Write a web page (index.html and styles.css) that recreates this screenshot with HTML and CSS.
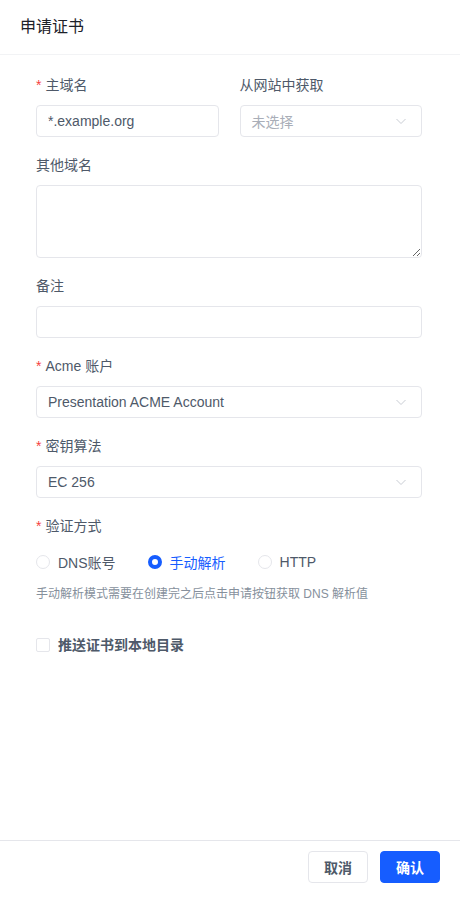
FILE: index.html
```html
<!DOCTYPE html>
<html lang="zh-CN">
<head>
    <meta charset="UTF-8">
    <meta name="viewport" content="width=device-width, initial-scale=1.0">
    <title>申请证书</title>
    <link rel="stylesheet" href="styles.css">
</head>
<body>
    <div class="drawer">
        <!-- Drawer header -->
        <div class="drawer-header">申请证书</div>

        <!-- Form body -->
        <div class="drawer-body">
            <div class="row">
                <div class="form-item">
                    <label class="label"><span class="required">*</span>主域名</label>
                    <input type="text" class="input" value="*.example.org">
                </div>
                <div class="form-item">
                    <label class="label">从网站中获取</label>
                    <div class="select">
                        <span class="placeholder">未选择</span>
                        <svg class="arrow" width="12" height="12" viewBox="0 0 12 12"><path d="M1.5 4l4.5 4.5L10.5 4" fill="none" stroke="#c9cdd4" stroke-width="1"/></svg>
                    </div>
                </div>
            </div>

            <div class="form-item">
                <label class="label">其他域名</label>
                <textarea class="textarea"></textarea>
            </div>

            <div class="form-item">
                <label class="label">备注</label>
                <input type="text" class="input">
            </div>

            <div class="form-item">
                <label class="label"><span class="required">*</span>Acme 账户</label>
                <div class="select">
                    <span class="value">Presentation ACME Account</span>
                    <svg class="arrow" width="12" height="12" viewBox="0 0 12 12"><path d="M1.5 4l4.5 4.5L10.5 4" fill="none" stroke="#c9cdd4" stroke-width="1"/></svg>
                </div>
            </div>

            <div class="form-item">
                <label class="label"><span class="required">*</span>密钥算法</label>
                <div class="select">
                    <span class="value">EC 256</span>
                    <svg class="arrow" width="12" height="12" viewBox="0 0 12 12"><path d="M1.5 4l4.5 4.5L10.5 4" fill="none" stroke="#c9cdd4" stroke-width="1"/></svg>
                </div>
            </div>

            <div class="form-item last">
                <label class="label"><span class="required">*</span>验证方式</label>
                <div class="radio-group">
                    <span class="radio"><span class="radio-mask"></span>DNS账号</span>
                    <span class="radio checked"><span class="radio-mask"></span>手动解析</span>
                    <span class="radio"><span class="radio-mask"></span>HTTP</span>
                </div>
                <div class="hint">手动解析模式需要在创建完之后点击申请按钮获取 DNS 解析值</div>
            </div>

            <div class="checkbox">
                <span class="checkbox-mask"></span>推送证书到本地目录
            </div>
        </div>

        <!-- Footer buttons -->
        <div class="drawer-footer">
            <button class="btn">取消</button>
            <button class="btn primary">确认</button>
        </div>
    </div>
</body>
</html>
```

FILE: styles.css
```css
/* General page */
html, body {
    height: 100%;
}

body {
    margin: 0;
    background-color: #fff;
    font-family: "Liberation Sans", Arial, "Noto Sans CJK SC", sans-serif;
    font-size: 14px;
    color: #4e5969;
}

/* Drawer */
.drawer {
    height: 100%;
    display: flex;
    flex-direction: column;
}

.drawer-header {
    height: 54px;
    line-height: 54px;
    padding: 0 20px;
    font-size: 16px;
    color: #1d2129;
    border-bottom: 1px solid #f2f3f5;
    flex-shrink: 0;
}

.drawer-body {
    flex: 1;
    padding: 19px 38px 0 36px;
}

/* Form */
.row {
    display: flex;
    gap: 21px;
}

.row .form-item {
    flex: 1;
}

.form-item {
    margin-bottom: 17px;
}

.form-item.last {
    margin-bottom: 0;
}

.label {
    display: block;
    height: 22px;
    line-height: 22px;
    margin-bottom: 9px;
    color: #4e5969;
}

.required {
    color: #f53f3f;
    margin-right: 4px;
}

.input,
.textarea,
.select {
    box-sizing: border-box;
    width: 100%;
    border: 1px solid #e5e6eb;
    border-radius: 4px;
    background-color: #fff;
    font-family: inherit;
    font-size: 14px;
    color: #4e5969;
    outline: none;
}

.input {
    height: 32px;
    padding: 0 11px;
    display: block;
}

.textarea {
    display: block;
    height: 73px;
    padding: 4px 11px;
    resize: vertical;
}

.select {
    height: 32px;
    padding: 0 14px 0 11px;
    display: flex;
    align-items: center;
    justify-content: space-between;
}

.placeholder {
    color: #a9aeb8;
}

.arrow {
    display: block;
}

/* Radio group */
.radio-group {
    height: 32px;
    display: flex;
    align-items: center;
}

.radio {
    display: flex;
    align-items: center;
    margin-right: 32px;
    color: #4e5969;
}

.radio-mask {
    box-sizing: border-box;
    width: 14px;
    height: 14px;
    border: 1px solid #e5e6eb;
    border-radius: 50%;
    margin-right: 8px;
}

.radio.checked {
    color: #165dff;
}

.radio.checked .radio-mask {
    border: 4px solid #165dff;
    background-color: #fff;
}

.hint {
    margin-top: 6px;
    font-size: 12px;
    line-height: 20px;
    color: #86909c;
}

/* Checkbox */
.checkbox {
    margin-top: 30px;
    display: flex;
    align-items: center;
    font-weight: bold;
    color: #4e5969;
    line-height: 22px;
}

.checkbox-mask {
    box-sizing: border-box;
    width: 14px;
    height: 14px;
    border: 1px solid #e5e6eb;
    border-radius: 2px;
    margin-right: 8px;
}

/* Footer */
.drawer-footer {
    flex-shrink: 0;
    border-top: 1px solid #e5e6eb;
    padding: 10px 20px 20px;
    display: flex;
    justify-content: flex-end;
    gap: 12px;
}

.btn {
    height: 32px;
    width: 60px;
    border: 1px solid #e5e6eb;
    border-radius: 4px;
    background-color: #fff;
    color: #4e5969;
    font-family: inherit;
    font-size: 14px;
    font-weight: bold;
    cursor: pointer;
}

.btn.primary {
    background-color: #165dff;
    border-color: #165dff;
    color: #fff;
}
```
